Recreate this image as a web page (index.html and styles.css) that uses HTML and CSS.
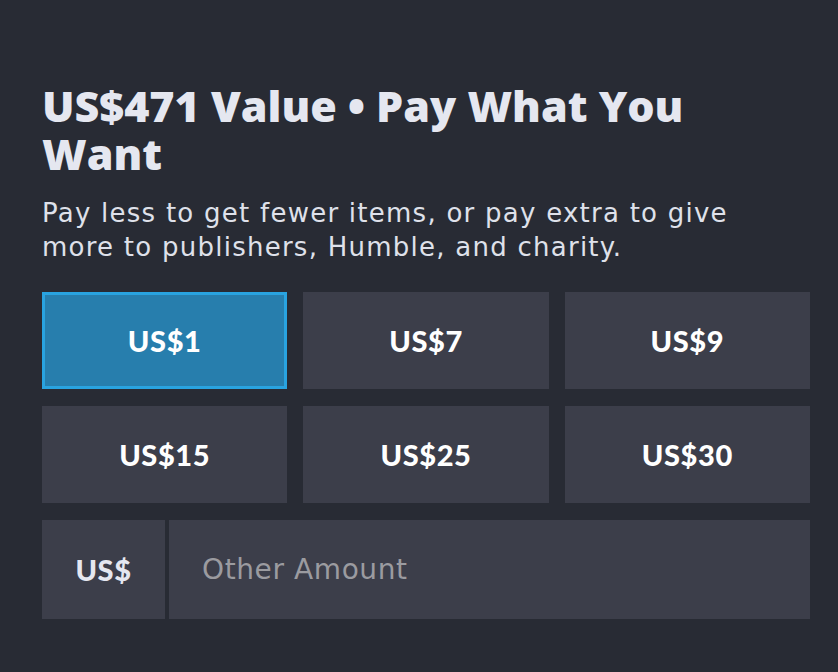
FILE: index.html
```html
<!DOCTYPE html>
<html>
<head>
<meta charset="utf-8">
<link rel="stylesheet" href="styles.css">
</head>
<body>
<div class="panel">
  <h1 class="title">US$471 Value • Pay What You Want</h1>
  <p class="subtitle">Pay less to get fewer items, or pay extra to give more to publishers, Humble, and charity.</p>
  <div class="grid">
    <button class="amount selected">US$1</button>
    <button class="amount">US$7</button>
    <button class="amount">US$9</button>
    <button class="amount">US$15</button>
    <button class="amount">US$25</button>
    <button class="amount">US$30</button>
  </div>
  <div class="custom">
    <div class="currency">US$</div>
    <div class="other">Other Amount</div>
  </div>
</div>
</body>
</html>
```

FILE: styles.css
```css
html, body {
  margin: 0;
  padding: 0;
  background: #282b34;
}
.panel {
  padding: 80px 28px 0 42px;
  font-family: "DejaVu Sans", sans-serif;
}
.title {
  margin: 0;
  font-family: "Open Sans", sans-serif;
  font-size: 43px;
  line-height: 48px;
  font-weight: 800;
  color: #e5e7f0;
  width: 700px;
  padding-top: 2px;
}
.subtitle {
  margin: 18px 0 0 0;
  font-size: 26px;
  line-height: 34px;
  font-weight: 400;
  color: #dfe1ea;
  letter-spacing: 1.25px;
  width: 740px;
}
.grid {
  margin-top: 28px;
  display: grid;
  grid-template-columns: 1fr 1fr 1fr;
  column-gap: 16px;
  row-gap: 17px;
}
.amount {
  height: 97px;
  border: 0;
  background: #3c3e4a;
  color: #ffffff;
  font-family: Lato, sans-serif;
  font-weight: 900;
  font-size: 29px;
  letter-spacing: 0.6px;
  padding: 0;
}
.amount.selected {
  background: #277ead;
  border: 3px solid #29a3e0;
}
.custom {
  margin-top: 17px;
  display: flex;
  gap: 4px;
  height: 99px;
}
.currency {
  width: 123px;
  background: #3c3e4a;
  color: #e5e7f0;
  font-family: Lato, sans-serif;
  font-weight: 900;
  font-size: 29px;
  letter-spacing: 0.6px;
  display: flex;
  align-items: center;
  justify-content: center;
}
.other {
  flex: 1;
  background: #3c3e4a;
  color: #9b9ba0;
  font-size: 28px;
  letter-spacing: 0.6px;
  display: flex;
  align-items: center;
  padding-left: 33px;
}
```
